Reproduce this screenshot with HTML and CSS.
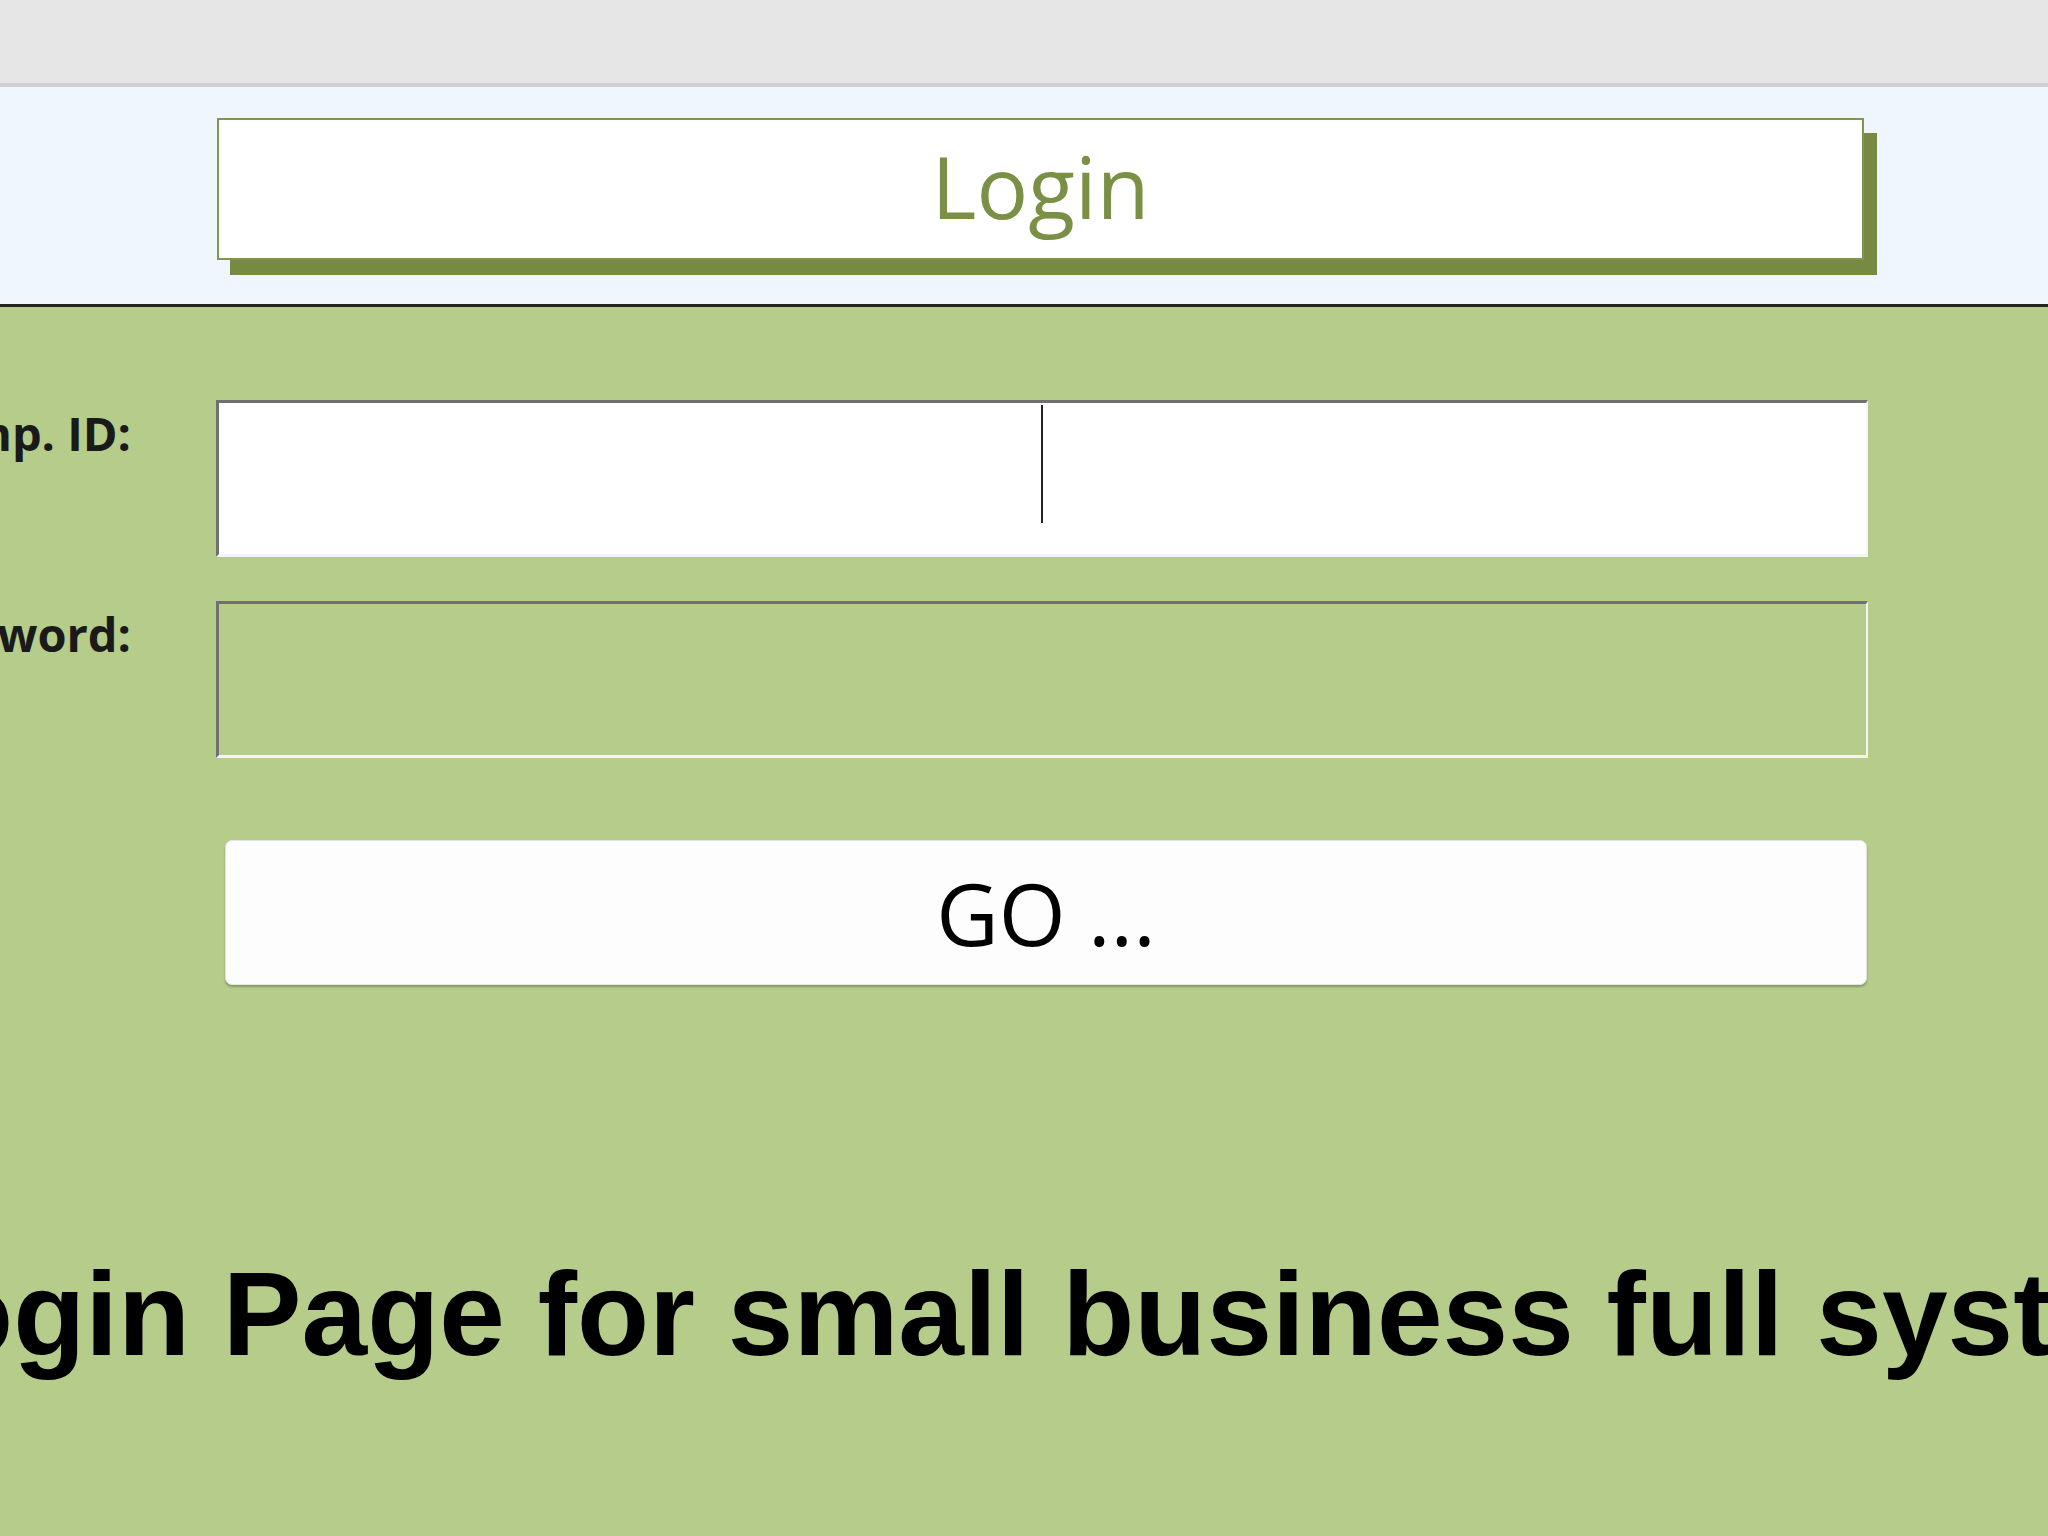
FILE: index.html
```
<!DOCTYPE html>
<html>
<head>
    <title>Login</title>
    <link rel="stylesheet" href="styles.css">
</head>
<body>
<div class="topbar"></div>

<header class="header">
    <div class="title-box">Login</div>
</header>

<main class="content">
    <form class="login-form" action="/login" method="post">
        <label for="emp_id">Emp. ID:</label>
        <div class="field">
            <input type="text" id="emp_id" name="emp_id" class="field-input field-id">
            <span class="caret"></span>
        </div>

        <label for="password">Password:</label>
        <div class="field">
            <input type="password" id="password" name="password" class="field-input field-pw">
        </div>

        <div class="spacer"></div>
        <button type="submit" class="go-button">GO ...</button>
    </form>

    <div class="tagline">
        <h1>Login Page for small business full system</h1>
    </div>
</main>
</body>
</html>
```

FILE: styles.css
```
html, body {
    margin: 0;
    padding: 0;
    overflow: hidden;
}

body {
    font-family: "Open Sans", sans-serif;
    background-color: #b5cc8a;
    min-height: 100vh;
}

.topbar {
    height: 83px;
    background-color: #e6e6e6;
    border-bottom: 4px solid #d0d0d0;
}

.header {
    height: 186px;
    padding: 31px 0 0 217px;
    background-color: #eff6fd;
    border-bottom: 3px solid #222222;
}

.title-box {
    width: 1647px;
    height: 142px;
    box-sizing: border-box;
    border: 2px solid #7f9651;
    background-color: #ffffff;
    box-shadow: 13px 15px 0 #768a42;
    color: #7a9145;
    font-size: 86px;
    line-height: 132px;
    text-align: center;
}

.content {
    background-color: #b5cc8a;
    min-height: calc(100vh - 307px);
    padding-top: 93px;
}

.login-form {
    display: grid;
    grid-template-columns: 240px 1652px;
    column-gap: 85px;
    row-gap: 44px;
    margin-left: -109px;
}

.login-form label {
    justify-self: end;
    font-weight: bold;
    font-size: 47px;
    line-height: 62px;
    margin-top: 2px;
    color: #1a1a1a;
}

.field {
    position: relative;
}

.field-input {
    display: block;
    width: 100%;
    height: 157px;
    box-sizing: border-box;
    margin: 0;
    padding: 0 10px;
    border-style: solid;
    border-width: 3px 2px 3px 3px;
    border-color: #707070 #f6f6fa #f4f4f8 #707070;
    font-family: "Open Sans", sans-serif;
    font-size: 60px;
    text-align: center;
    outline: none;
}

.field-id {
    background-color: #ffffff;
}

.field-pw {
    background-color: transparent;
}

.caret {
    position: absolute;
    left: 825px;
    top: 5px;
    width: 2px;
    height: 118px;
    background-color: #222222;
}

.spacer {
    height: 0;
}

.go-button {
    margin: 38px 0 0 9px;
    width: 1642px;
    height: 145px;
    background-color: #fdfdfd;
    border: 1px solid #e4e4e4;
    border-radius: 7px;
    box-shadow: 0 2px 2px #00000040;
    color: #000000;
    font-family: "Open Sans", sans-serif;
    font-size: 86px;
    font-weight: 500;
    cursor: pointer;
}

.tagline {
    display: flex;
    justify-content: center;
    width: 2092px;
    margin-top: 262px;
}

.tagline h1 {
    margin: 0;
    white-space: nowrap;
    font-family: "Liberation Sans", Arial, sans-serif;
    font-weight: bold;
    font-size: 118px;
    line-height: 1.15;
    color: #000000;
}
```
